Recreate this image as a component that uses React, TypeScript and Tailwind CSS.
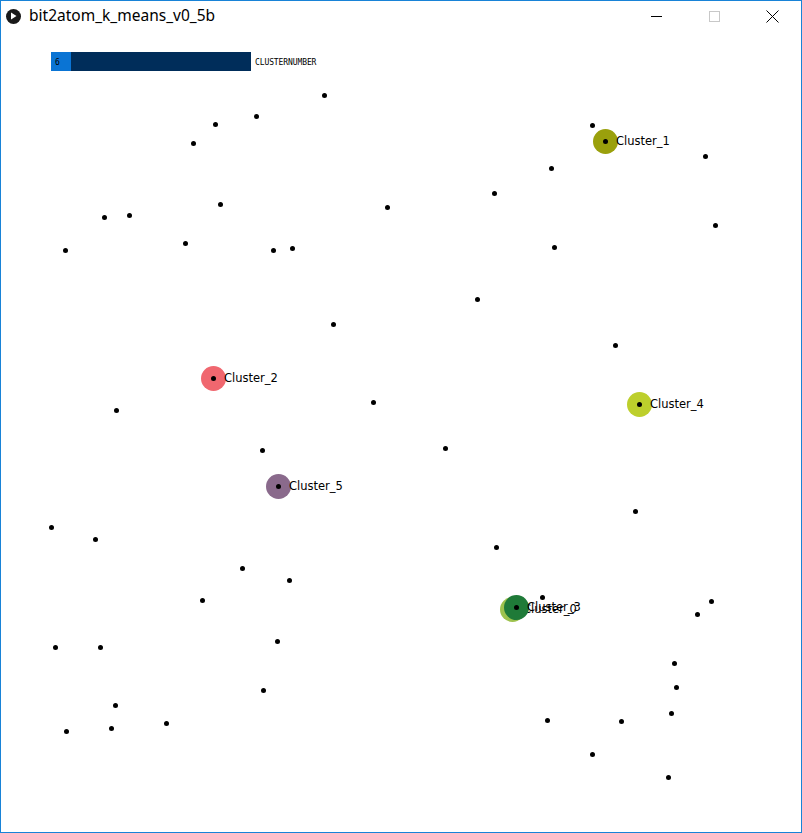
import React from 'react';

// sample points, page coords
const points: [number, number][] = [
  [324, 95], [215, 124], [256, 116], [193, 143], [592, 125], [705, 156], [551, 168],
  [494, 193], [387, 207], [220, 204], [104, 217], [129, 215], [65, 250], [185, 243],
  [273, 250], [292, 248], [554, 247], [715, 225], [477, 299], [333, 324], [615, 345],
  [116, 410], [373, 402], [445, 448], [262, 450], [51, 527], [95, 539], [635, 511],
  [496, 547], [242, 568], [289, 580], [202, 600], [542, 597], [711, 601], [697, 614],
  [277, 641], [55, 647], [100, 647], [674, 663], [676, 687], [263, 690], [115, 705],
  [671, 713], [66, 731], [111, 728], [166, 723], [547, 720], [621, 721], [592, 754],
  [668, 777],
];

const clusters = [
  { name: 'Cluster_0', x: 512, y: 609, color: '#9dc24d' },
  { name: 'Cluster_1', x: 605, y: 141, color: '#9aa00c' },
  { name: 'Cluster_2', x: 213, y: 378, color: '#f0676f' },
  { name: 'Cluster_4', x: 639, y: 404, color: '#bdcf2c' },
  { name: 'Cluster_5', x: 278, y: 486, color: '#8a6a8c' },
  { name: 'Cluster_3', x: 516, y: 607, color: '#1f7a38' },
];

const TOP = 31;
const LEFT = 1;

const App = () => {
  return (
    <div className="w-[802px] h-[833px] border border-[#1883d7] bg-white flex flex-col overflow-hidden">
      <div className="h-[30px] flex items-center shrink-0">
        <div className="ml-[5px] w-[15px] h-[15px] rounded-full bg-[#1a1a1a] flex items-center justify-center">
          <svg width="7" height="8" viewBox="0 0 7 8"><path d="M1 0.5 L6.5 4 L1 7.5 Z" fill="#fff" /></svg>
        </div>
        <span className="ml-[8px] text-[15.5px] text-black font-['Noto_Sans',sans-serif] leading-none">bit2atom_k_means_v0_5b</span>
        <div className="ml-auto flex items-center h-full">
          <div className="w-[58px] h-full flex items-center justify-center">
            <div className="w-[11px] h-px bg-black" />
          </div>
          <div className="w-[58px] h-full flex items-center justify-center">
            <div className="w-[11px] h-[11px] border border-[#c8c8c8]" />
          </div>
          <div className="w-[58px] h-full flex items-center justify-center">
            <svg width="13" height="13" viewBox="0 0 13 13"><path d="M0.5 0.5 L12.5 12.5 M12.5 0.5 L0.5 12.5" stroke="#000" strokeWidth="1" /></svg>
          </div>
        </div>
      </div>
      <div className="relative flex-1 bg-white">
        <div className="absolute left-[50px] top-[21px] flex items-center">
          <div className="w-[200px] h-[19px] bg-[#002d5a] flex">
            <div className="w-[20px] h-full bg-[#0a74d4] flex items-center pl-[4px] pt-[2px]">
              <span className="text-[8px] text-black font-['DejaVu_Sans_Mono',monospace] leading-none">6</span>
            </div>
          </div>
          <span className="ml-[4px] mt-[2px] text-[8px] text-black font-['DejaVu_Sans_Mono',monospace] leading-none tracking-[-0.1px]">CLUSTERNUMBER</span>
        </div>
        {points.map(([x, y], i) => (
          <div key={i} className="absolute w-[5px] h-[5px] rounded-full bg-black" style={{ left: x - LEFT - 2.5, top: y - TOP - 2.5 }} />
        ))}
        {clusters.map((c) => (
          <React.Fragment key={c.name}>
            <div className="absolute w-[25px] h-[25px] rounded-full" style={{ left: c.x - LEFT - 12.5, top: c.y - TOP - 12.5, backgroundColor: c.color }} />
            <div className="absolute w-[5px] h-[5px] rounded-full bg-black" style={{ left: c.x - LEFT - 2.5, top: c.y - TOP - 2.5 }} />
            <span className="absolute text-[11.5px] leading-none text-black font-['DejaVu_Sans',sans-serif] whitespace-nowrap" style={{ left: c.x - LEFT + 11, top: c.y - TOP - 5 }}>{c.name}</span>
          </React.Fragment>
        ))}
      </div>
    </div>
  );
};

export default App;
